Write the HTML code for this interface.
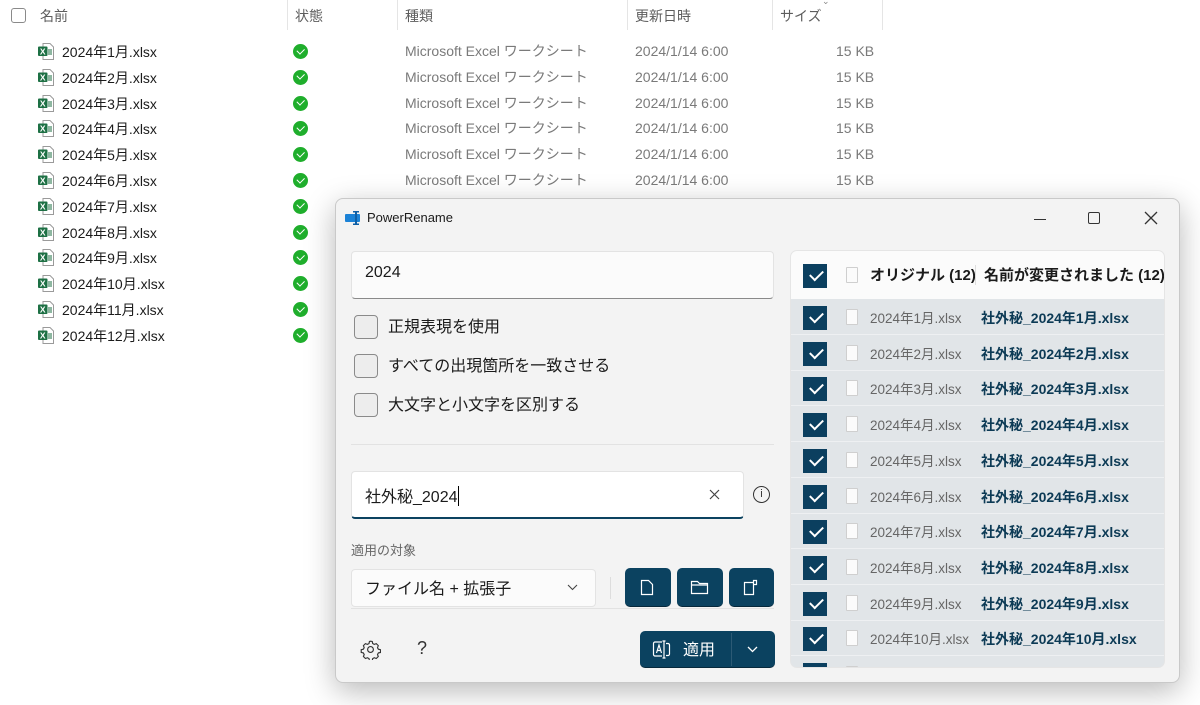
<!DOCTYPE html>
<html><head><meta charset="utf-8"><style>
*{box-sizing:border-box;margin:0;padding:0}
body{width:1200px;height:705px;overflow:hidden;background:#fff;font-family:"Liberation Sans","Noto Sans CJK JP",sans-serif;position:relative;color:#1b1b1b}
.a{position:absolute;white-space:nowrap}
.hd{font-size:14px;color:#5d5d5d;top:6px}
.sep{position:absolute;top:0;width:1px;height:30px;background:#e5e5e5}
.fn{font-size:14px;color:#1b1b1b}
.g{font-size:14px;color:#7a7a7a}
.ok{position:absolute;width:15px;height:15px;border-radius:50%;background:#1fae2c}
.ok:after{content:"";position:absolute;left:4px;top:3.5px;width:6px;height:3.5px;border-left:1.6px solid #fff;border-bottom:1.6px solid #fff;transform:rotate(-45deg)}
.xi{position:absolute;width:16px;height:17px}
.win{position:absolute;left:335px;top:198px;width:845px;height:485px;background:#f3f3f3;border:1px solid #c9c9c9;border-radius:8px;box-shadow:0 8px 30px rgba(0,0,0,.28)}
.cb{position:absolute;width:24px;height:24px;border:1px solid #8a8a8a;border-radius:4px;background:#ededed}
.lbl{font-size:16px;color:#1b1b1b}
.chk{position:absolute;width:24px;height:24px;background:#0b3f5f;border:1px solid #0b3f5f}
.chk:after{content:"";position:absolute;left:6px;top:5px;width:11px;height:6px;border-left:2px solid #fff;border-bottom:2px solid #fff;transform:rotate(-45deg)}
.fi{position:absolute;width:12px;height:16px;background:#fbfbfb;border:1px solid #cfcfcf;border-radius:1px}
.row{position:absolute;left:0;width:374px;height:35px;background:#e1e5e8;border-bottom:1px solid #eef0f2}
.btn{position:absolute;background:#0b4260;border-radius:5px;border-bottom:1px solid #06283b}
</style></head><body>
<div class="a" style="left:11px;top:8px;width:15px;height:15px;border:1px solid #8a8a8a;border-radius:3px"></div>
<div class="a hd" style="left:40px">名前</div>
<div class="sep" style="left:287px"></div>
<div class="a hd" style="left:295px">状態</div>
<div class="sep" style="left:397px"></div>
<div class="a hd" style="left:405px">種類</div>
<div class="sep" style="left:627px"></div>
<div class="a hd" style="left:635px">更新日時</div>
<div class="sep" style="left:772px"></div>
<div class="a hd" style="left:780px">サイズ</div>
<div class="a" style="left:822px;top:-4px;font-size:9px;color:#888">⌄</div>
<div class="sep" style="left:882px"></div>

<div id="rows"></div>
<script>
var h='';
for(var i=0;i<12;i++){var y=43+i*25.8;
h+='<svg class="xi" style="left:38px;top:'+(y)+'px" viewBox="0 0 16 17"><path d="M5 .5h7l3.5 3.5v12.5H5z" fill="#fff" stroke="#9a9a9a"/><rect x="10" y="6" width="4" height="6" fill="#1d7044" opacity=".5"/><rect x="0" y="3.5" width="9.5" height="9.5" rx="1" fill="#1d7044"/><text x="4.75" y="11.3" font-size="8.5" font-weight="bold" fill="#fff" text-anchor="middle" font-family="Liberation Sans">X</text></svg>';
h+='<div class="a fn" style="left:62px;top:'+(y-1)+'px">2024年'+(i+1)+'月.xlsx</div>';
h+='<div class="ok" style="left:293px;top:'+(y+1)+'px"></div>';
if(i<6){h+='<div class="a g" style="left:405px;top:'+(y-2)+'px">Microsoft Excel ワークシート</div><div class="a g" style="left:635px;top:'+(y)+'px">2024/1/14 6:00</div><div class="a g" style="left:836px;top:'+(y)+'px">15 KB</div>';}
}
document.getElementById('rows').outerHTML=h;
</script>

<div class="win">
 <svg class="a" style="left:9px;top:11px" width="16" height="16" viewBox="0 0 16 16"><rect x="0" y="4" width="15" height="8" rx="1" fill="#1b82d6"/><rect x="10" y="1" width="2" height="14" fill="#0e5fa6"/><rect x="8" y="1" width="6" height="1.5" fill="#0e5fa6"/><rect x="8" y="13.5" width="6" height="1.5" fill="#0e5fa6"/></svg>
 <div class="a" style="left:31px;top:11px;font-size:13px;color:#1b1b1b">PowerRename</div>
 <div class="a" style="left:698px;top:20px;width:12px;height:1px;background:#333"></div>
 <div class="a" style="left:752px;top:13px;width:12px;height:12px;border:1.3px solid #333;border-radius:2px"></div>
 <svg class="a" style="left:808px;top:12px" width="14" height="14" viewBox="0 0 14 14"><path d="M1 1L13 13M13 1L1 13" stroke="#333" stroke-width="1.3"/></svg>

 <div class="a" style="left:15px;top:52px;width:423px;height:48px;background:#fbfbfb;border:1px solid #e3e3e3;border-bottom:1px solid #8a8a8a;border-radius:4px"></div>
 <div class="a" style="left:29px;top:65px;font-size:16px">2024</div>

 <div class="cb" style="left:18px;top:116px"></div><div class="a lbl" style="left:52px;top:114px">正規表現を使用</div>
 <div class="cb" style="left:18px;top:155px"></div><div class="a lbl" style="left:52px;top:153px">すべての出現箇所を一致させる</div>
 <div class="cb" style="left:18px;top:194px"></div><div class="a lbl" style="left:52px;top:192px">大文字と小文字を区別する</div>
 <div class="a" style="left:15px;top:245px;width:423px;height:1px;background:#e2e2e2"></div>

 <div class="a" style="left:15px;top:272px;width:393px;height:48px;background:#fff;border:1px solid #e3e3e3;border-bottom:2px solid #0b4260;border-radius:4px"></div>
 <div class="a" style="left:29px;top:284px;font-size:16px">社外秘_2024<span style="display:inline-block;width:1px;height:20px;background:#000;vertical-align:-4px"></span></div>
 <svg class="a" style="left:373px;top:290px" width="11" height="11" viewBox="0 0 11 11"><path d="M1 1L10 10M10 1L1 10" stroke="#444" stroke-width="1.2"/></svg>
 <div class="a" style="left:417px;top:287px;width:17px;height:17px;border:1.3px solid #333;border-radius:50%;font-size:11px;text-align:center;line-height:15px;color:#333">i</div>

 <div class="a" style="left:15px;top:341px;font-size:13px;color:#666">適用の対象</div>
 <div class="a" style="left:15px;top:370px;width:245px;height:38px;background:#fbfbfb;border:1px solid #e3e3e3;border-radius:4px"></div>
 <div class="a" style="left:29px;top:376px;font-size:16px">ファイル名 + 拡張子</div>
 <svg class="a" style="left:231px;top:385px" width="11" height="7" viewBox="0 0 11 7"><path d="M1 1l4.5 4.5L10 1" stroke="#444" fill="none" stroke-width="1.1"/></svg>
 <div class="a" style="left:15px;top:409px;width:423px;height:1px;background:#e2e2e2"></div>
 <div class="a" style="left:274px;top:378px;width:1px;height:22px;background:#ddd"></div>
 <div class="btn" style="left:289px;top:369px;width:46px;height:39px"></div>
 <svg class="a" style="left:304px;top:380px" width="14" height="17" viewBox="0 0 14 17"><path d="M1.5 1.5h7l4 4v10h-11z" fill="none" stroke="#fff" stroke-width="1.2"/></svg>
 <div class="btn" style="left:341px;top:369px;width:46px;height:39px"></div>
 <svg class="a" style="left:354px;top:381px" width="19" height="15" viewBox="0 0 19 15"><path d="M1.5 1.5h6l2 2h8v10h-16z M1.5 5h16" fill="none" stroke="#fff" stroke-width="1.2"/></svg>
 <div class="btn" style="left:393px;top:369px;width:45px;height:39px"></div>
 <svg class="a" style="left:407px;top:380px" width="16" height="17" viewBox="0 0 16 17"><path d="M1.5 3.5h9v12h-9z M10.5 3.5v-2h3v4h-3" fill="none" stroke="#fff" stroke-width="1.2"/></svg>

 <svg class="a" style="left:24px;top:440px" width="21" height="21" viewBox="0 0 24 24"><path d="M12 2.5l2 .3.5 2.4 1.8 1 2.3-.9 2.3 2.3-.9 2.3 1 1.8 2.4.5v3.2l-2.4.5-1 1.8.9 2.3-2.3 2.3-2.3-.9-1.8 1-.5 2.4h-3.2l-.5-2.4-1.8-1-2.3.9-2.3-2.3.9-2.3-1-1.8-2.4-.5v-3.2l2.4-.5 1-1.8-.9-2.3 2.3-2.3 2.3.9 1.8-1 .5-2.4z" fill="none" stroke="#333" stroke-width="1.3"/><circle cx="12" cy="12" r="3.3" fill="none" stroke="#333" stroke-width="1.3"/></svg>
 <div class="a" style="left:81px;top:439px;font-size:18px;color:#333">?</div>
 <div class="btn" style="left:304px;top:432px;width:135px;height:37px"></div>
 <div class="a" style="left:395px;top:434px;width:1px;height:33px;background:#2c5a75"></div>
 <svg class="a" style="left:316px;top:441px" width="20" height="19" viewBox="0 0 20 19"><path d="M10 2H3a1.5 1.5 0 0 0-1.5 1.5v11A1.5 1.5 0 0 0 3 16h7" fill="none" stroke="#fff" stroke-width="1.2"/><path d="M4.5 13L7 5l2.5 8M5.3 10.5h3.4M12 1v17M10.5 1h3M10.5 18h3M14 3.5h2A1.5 1.5 0 0 1 17.5 5v9a1.5 1.5 0 0 1-1.5 1.5h-2" fill="none" stroke="#fff" stroke-width="1.2"/></svg>
 <div class="a" style="left:347px;top:437px;font-size:16px;color:#fff">適用</div>
 <svg class="a" style="left:411px;top:447px" width="11" height="7" viewBox="0 0 11 7"><path d="M1 1l4.5 4.5L10 1" stroke="#fff" fill="none" stroke-width="1.3"/></svg>

 <div class="a" style="left:454px;top:51px;width:375px;height:418px;border:1px solid #e5e5e5;border-radius:7px;overflow:hidden;background:#e1e5e8">
  <div class="a" style="left:0;top:0;width:375px;height:48px;background:#fbfbfb"></div>
  <div class="chk" style="left:12px;top:13px"></div>
  <div class="fi" style="left:55px;top:16px"></div>
  <div class="a" style="left:79px;top:13px;font-size:15px;font-weight:bold">オリジナル (12)</div>
  <div class="a" style="left:184px;top:14px;width:1px;height:20px;background:#ddd"></div>
  <div class="a" style="left:193px;top:13px;font-size:15px;font-weight:bold">名前が変更されました (12)</div>
  <div id="pr"></div>
 </div>
</div>
<script>
var p='';for(var i=0;i<11;i++){var y=49+i*35.7;
p+='<div class="row" style="top:'+y+'px"></div><div class="chk" style="left:12px;top:'+(y+6)+'px"></div><div class="fi" style="left:55px;top:'+(y+9)+'px"></div>';
if(i<10)p+='<div class="a" style="left:79px;top:'+(y+7)+'px;font-size:13.5px;color:#666">2024年'+(i+1)+'月.xlsx</div><div class="a" style="left:190px;top:'+(y+8)+'px;font-size:14px;font-weight:bold;color:#0c3a55">社外秘_2024年'+(i+1)+'月.xlsx</div>';}
document.getElementById('pr').outerHTML=p;
</script>
</body></html>
